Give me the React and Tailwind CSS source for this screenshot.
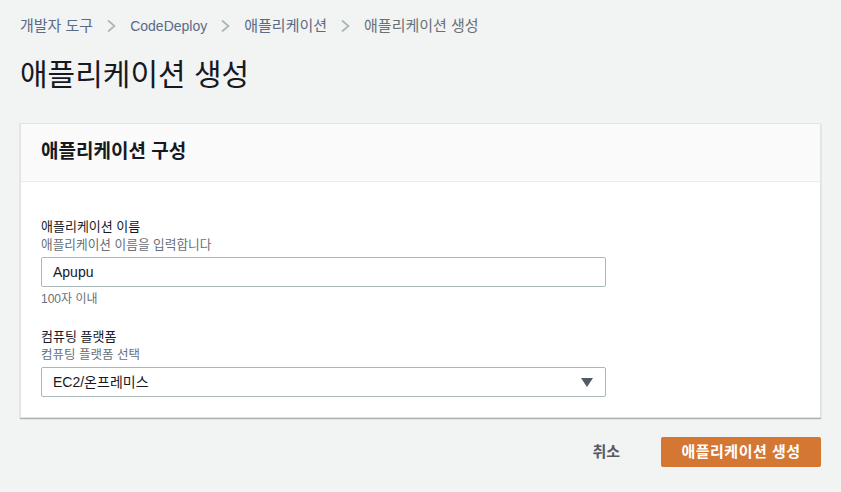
const font = { fontFamily: '"Liberation Sans", "Noto Sans CJK KR", sans-serif' };

function Crumb({ children, last, latin }) {
  return (
    <span className={`${latin ? 'text-[14px]' : 'text-[15px]'} leading-[20px] ${last ? 'text-[#687078]' : 'text-[#5b6a86]'}`}>
      {children}
    </span>
  );
}

function Sep() {
  return (
    <svg width="9" height="14" viewBox="0 0 9 14" className="mx-[14px]">
      <path d="M1 1.5 7.5 7 1 12.5" fill="none" stroke="#aab7b8" strokeWidth="1.7" />
    </svg>
  );
}

export default function App() {
  return (
    <div className="w-[841px] h-[492px] bg-[#f2f3f3] px-[20px]" style={font}>
      <nav className="flex items-center h-[20px] pt-[16px] box-content">
        <Crumb>개발자 도구</Crumb>
        <Sep />
        <Crumb latin>CodeDeploy</Crumb>
        <Sep />
        <Crumb>애플리케이션</Crumb>
        <Sep />
        <Crumb last>애플리케이션 생성</Crumb>
      </nav>
      <h1 className="mt-[19px] text-[30px] leading-[40px] text-[#16191f]">애플리케이션 생성</h1>

      <section className="mt-[28px] bg-white border border-[#e1e4e4] shadow-[0_1px_1px_rgba(0,28,36,0.3)]">
        <div className="h-[58px] bg-[#fafafa] border-b border-[#eaeded] flex items-center px-[20px]">
          <h2 className="text-[19px] font-bold text-[#16191f]">애플리케이션 구성</h2>
        </div>
        <div className="px-[20px] pt-[35px] pb-[20px]">
          <div>
            <div className="text-[13px] leading-[20px] text-[#16191f]">애플리케이션 이름</div>
            <div className="text-[12.7px] leading-[16px] text-[#687078]">애플리케이션 이름을 입력합니다</div>
            <div className="mt-[4px] w-[565px] h-[30px] border border-[#aab7b8] rounded-[2px] flex items-center px-[11px] text-[14px] text-[#16191f]">
              Apupu
            </div>
            <div className="mt-[3px] text-[12px] leading-[18px] text-[#687078]">100자 이내</div>
          </div>
          <div className="mt-[19px]">
            <div className="text-[13px] leading-[20px] text-[#16191f]">컴퓨팅 플랫폼</div>
            <div className="text-[12.5px] leading-[16px] text-[#687078]">컴퓨팅 플랫폼 선택</div>
            <div className="mt-[4px] w-[565px] h-[30px] border border-[#aab7b8] rounded-[2px] flex items-center justify-between pl-[11px] pr-[12px] text-[14px] text-[#16191f]">
              <span>EC2/온프레미스</span>
              <svg width="12" height="9" viewBox="0 0 12 9"><path d="M0 0h12L6 9z" fill="#545b64" /></svg>
            </div>
          </div>
        </div>
      </section>

      <div className="mt-[19px] flex items-center justify-end">
        <button type="button" className="text-[15px] font-bold text-[#545b64] mr-[41px]">취소</button>
        <button type="button" className="w-[160px] h-[30px] bg-[#d47733] rounded-[2px] text-white text-[15px] font-bold tracking-[0.5px]">
          애플리케이션 생성
        </button>
      </div>
    </div>
  );
}
